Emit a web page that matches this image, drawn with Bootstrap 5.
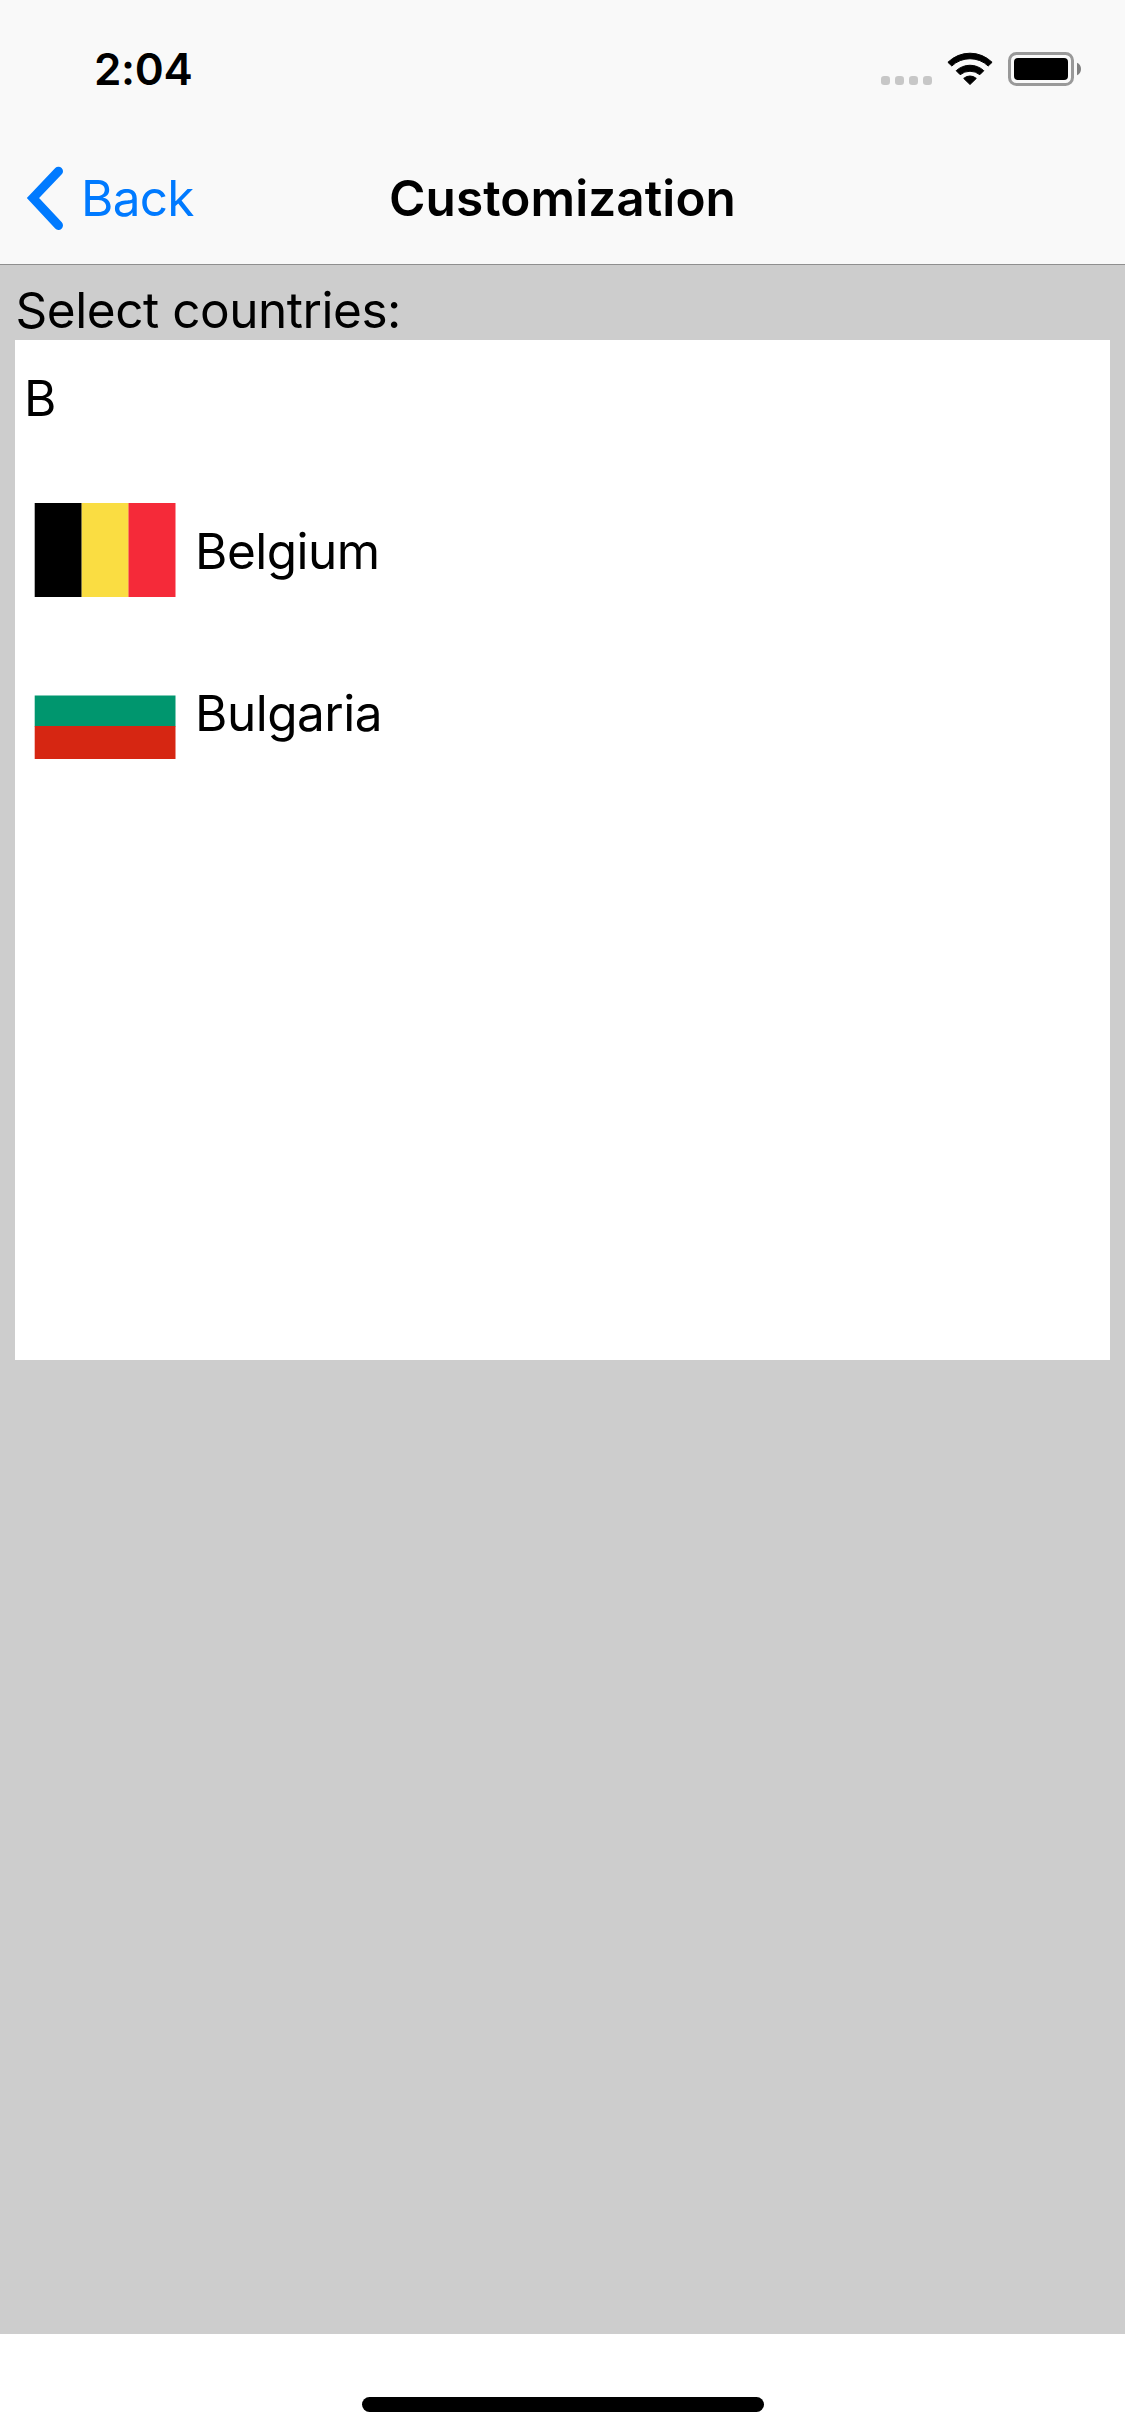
<!DOCTYPE html>
<html lang="en">
<head>
<meta charset="utf-8">
<meta name="viewport" content="width=device-width, initial-scale=1">
<title>Customization</title>
<link rel="stylesheet" href="https://cdn.jsdelivr.net/npm/bootstrap@5.3.0/dist/css/bootstrap.min.css">
<style>
body{font-family:Inter,"Liberation Sans",sans-serif;font-size:49.5px;color:#000;line-height:60px;letter-spacing:-.5px}
svg{display:block;flex:none}
.screen{height:2436px;overflow:hidden}
.top-area{height:265px;background:#f9f9f9;border-bottom:1px solid #8f8f8f}
.status-row{height:132px;padding:6px 43px 0 94px}
.clock{font-size:44px;font-weight:600;letter-spacing:-.3px}
.title-row{height:132px;padding:0 26px}
.back-link{color:#007aff;gap:17px;letter-spacing:-.7px}
.page-title{font-size:49.5px;line-height:60px;font-weight:600;letter-spacing:.08px}
.content-area{background:#cdcdcd;padding:15px 15px 0}
.prompt-line{padding-left:.5px;letter-spacing:-.46px}
.country-panel{height:1020px}
.group-head{height:130px;padding:28px 9px 0}
.country-row{height:162px;padding-left:19px;gap:19px}
.country-flag{margin-bottom:2px}
.home-area{height:102px;padding-top:63px}
.home-bar{width:402px;height:15px;border-radius:8px}
</style>
<script src="https://cdn.jsdelivr.net/npm/bootstrap@5.3.0/dist/js/bootstrap.bundle.min.js"></script>
</head>
<body>
<div class="screen d-flex flex-column bg-white">
  <header class="top-area">
    <div class="status-row d-flex justify-content-between align-items-center">
      <span class="clock">2:04</span>
      <svg width="202" height="34" viewBox="0 0 202 34" aria-hidden="true">
        <g fill="#c7c7c7">
          <rect x="1" y="24" width="9" height="9" rx="3.2"/>
          <rect x="15" y="24" width="9" height="9" rx="3.2"/>
          <rect x="29" y="24" width="9" height="9" rx="3.2"/>
          <rect x="43" y="24" width="9" height="9" rx="3.2"/>
        </g>
        <g stroke="#000" stroke-width="1" stroke-linejoin="round">
          <path d="M67.9 10.3A31.4 31.4 0 0 1 112.1 10.3L108.2 14A26.4 26.4 0 0 0 71.8 14Z"/>
          <path d="M76.2 18.7A20.2 20.2 0 0 1 103.8 18.7L99.8 22.7A15.5 15.5 0 0 0 80.2 22.7Z"/>
          <path d="M83.7 26.4A9.5 9.5 0 0 1 96.3 26.4L90 32.5Z"/>
        </g>
        <rect x="129.5" y="1.5" width="63" height="31" rx="7" fill="none" stroke="#999" stroke-width="3"/>
        <rect x="134" y="6" width="54" height="22" rx="4"/>
        <path d="M197 10.8Q201 12.6 201 17T197 23.2Z" fill="#808080"/>
      </svg>
    </div>
    <nav class="title-row row g-0 align-items-center">
      <div class="col d-flex"><a href="#" class="back-link d-flex align-items-center text-decoration-none">
        <svg width="38" height="64" viewBox="0 0 38 64" aria-hidden="true"><path d="M32.5 5.2 7 32 32.5 59.4" fill="none" stroke="#007aff" stroke-width="9" stroke-linecap="round" stroke-linejoin="miter"/></svg>
        <span>Back</span></a></div>
      <h1 class="page-title col-auto m-0">Customization</h1>
      <div class="col"></div>
    </nav>
  </header>
  <main class="content-area flex-grow-1">
    <div class="prompt-line">Select countries:</div>
    <section class="country-panel bg-white">
      <div class="group-head">B</div>
      <div class="country-row d-flex align-items-center">
        <svg class="country-flag" width="142" height="94" viewBox="0 0 142 94" role="img" aria-label="Flag of Belgium"><path d="M.7 0h47v94h-47z"/><path fill="#fadd42" d="M47.7 0h47v94h-47z"/><path fill="#f52a39" d="M94.5 0h47v94h-47z"/></svg>
        <span>Belgium</span>
      </div>
      <div class="country-row d-flex align-items-center">
        <svg class="country-flag" width="142" height="94" viewBox="0 0 142 94" role="img" aria-label="Flag of Bulgaria"><path fill="#fff" d="M.7 0h140.8v31H.7z"/><path fill="#00966e" d="M.7 30.6h140.8v31H.7z"/><path fill="#d62612" d="M.7 61h140.8v33H.7z"/></svg>
        <span>Bulgaria</span>
      </div>
    </section>
  </main>
  <footer class="home-area d-flex justify-content-center bg-white"><div class="home-bar bg-black"></div></footer>
</div>
</body>
</html>
